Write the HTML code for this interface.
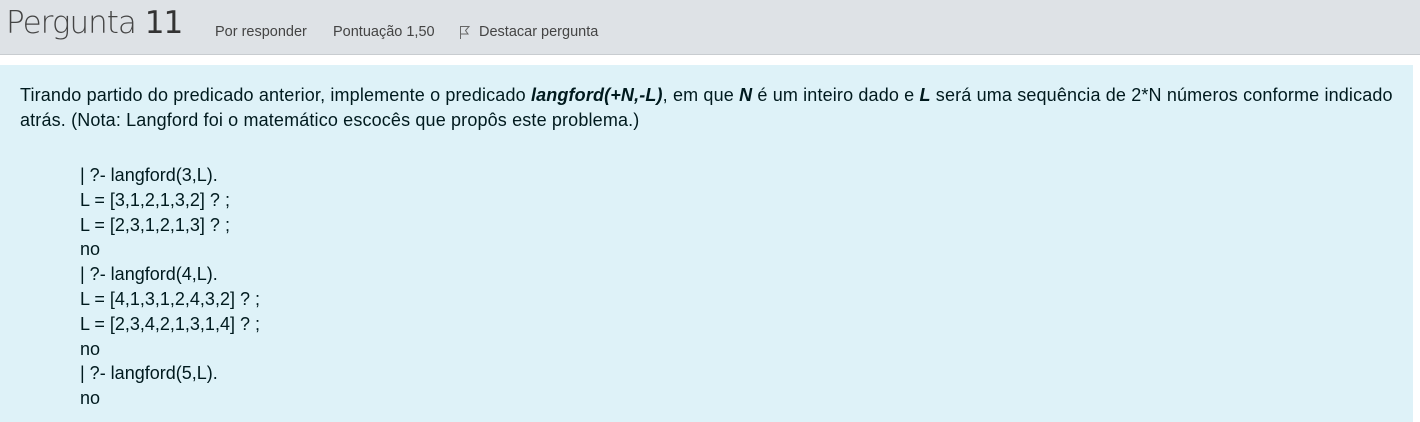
<!DOCTYPE html>
<html><head><meta charset="utf-8"><style>
html,body{margin:0;padding:0;width:1420px;height:422px;overflow:hidden;background:#fff;}
.hdr{position:absolute;left:0;top:0;width:1420px;height:54px;background:#dee2e6;border-bottom:1px solid #c8ccd0;}
.title{position:absolute;left:6px;top:5px;font-family:"DejaVu Sans","Liberation Sans",sans-serif;font-weight:200;font-size:31px;color:#444;letter-spacing:-1px;}
.title b{font-weight:400;color:#333;}
.meta{position:absolute;top:24px;font-family:"Liberation Sans",sans-serif;font-size:14.5px;color:#444;}
.box{position:absolute;left:0;top:65px;width:1413px;height:357px;background:#def2f8;font-family:"Liberation Sans",Arial,sans-serif;font-size:18px;color:#001a1e;}
.p{position:absolute;left:20px;top:18px;width:1385px;line-height:25px;letter-spacing:0.15px;}
.code{position:absolute;left:80px;top:98px;line-height:24.8px;}
</style></head><body>
<div class="hdr">
<div class="title">Pergunta <b>11</b></div>
<div class="meta" style="left:215px">Por responder</div>
<div class="meta" style="left:333px">Pontuação 1,50</div>
<svg style="position:absolute;left:459px;top:25px" width="12" height="15" viewBox="0 0 12 15"><path d="M1.5 1V14M1.5 1.5H10L6.5 5.5L9 9H1.5" fill="none" stroke="#666" stroke-width="1"/></svg>
<div class="meta" style="left:479px">Destacar pergunta</div>
</div>
<div class="box">
<div class="p">Tirando partido do predicado anterior, implemente o predicado <b><i>langford(+N,-L)</i></b>, em que <b><i>N</i></b> é um inteiro dado e <b><i>L</i></b> será uma sequência de 2*N números conforme indicado<br>atrás. (Nota: Langford foi o matemático escocês que propôs este problema.)</div>
<div class="code">| ?- langford(3,L).<br>L = [3,1,2,1,3,2] ? ;<br>L = [2,3,1,2,1,3] ? ;<br>no<br>| ?- langford(4,L).<br>L = [4,1,3,1,2,4,3,2] ? ;<br>L = [2,3,4,2,1,3,1,4] ? ;<br>no<br>| ?- langford(5,L).<br>no</div>
</div>
</body></html>
